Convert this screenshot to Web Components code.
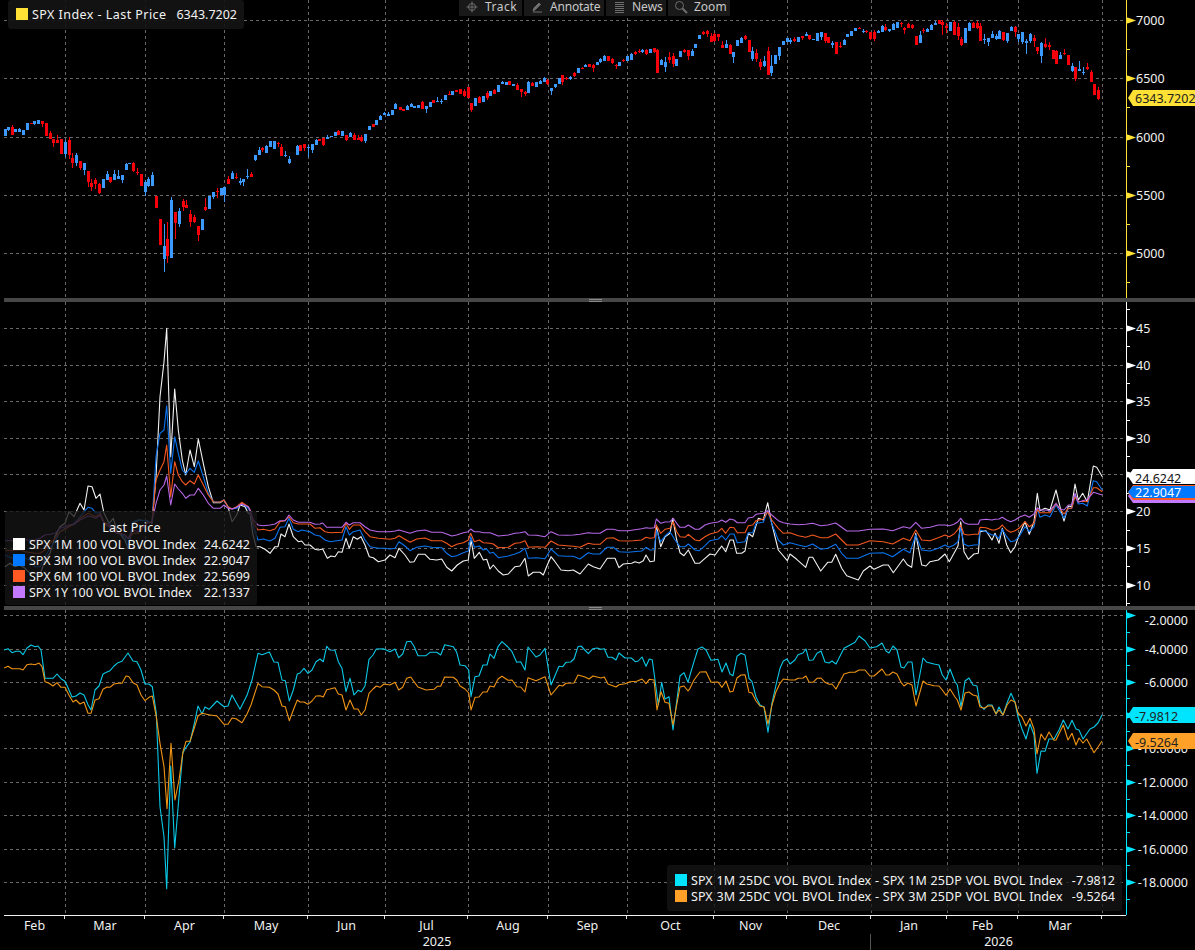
<![CDATA[<!DOCTYPE html>
<html><head><meta charset="utf-8"><title>SPX chart</title>
<style>
html,body{margin:0;background:#000;height:950px;overflow:hidden}
body{font-family:"Noto Sans","DejaVu Sans",sans-serif;font-size:12.5px;color:#f0f0f0;}
</style></head>
<body><chart-app>
  <chart-pane kind="price" top="0" height="298">
    <chart-legend style="left:4px;top:0;width:236px;height:29px;padding:6px 7px 0 8px;--ls:.45px;--ws:0px;background:rgba(20,20,20,.92)">
      <legend-row color="#ffe135" value="6343.7202">SPX Index - Last Price</legend-row>
    </chart-legend>
    <chart-toolbar></chart-toolbar>
  </chart-pane>
  <chart-divider></chart-divider>
  <chart-pane kind="vol" top="302" height="304">
    <chart-legend style="left:1px;top:209px;width:252px;height:94px;padding:9px 7px 0 8px;--ls:0px;--ws:.1px">
      <div style="text-align:center;height:16px;line-height:16px;letter-spacing:.2px">Last Price</div>
      <legend-row color="#fff" value="24.6242">SPX 1M 100 VOL BVOL Index</legend-row>
      <legend-row color="#0078ff" value="22.9047">SPX 3M 100 VOL BVOL Index</legend-row>
      <legend-row color="#ff5a24" value="22.5699">SPX 6M 100 VOL BVOL Index</legend-row>
      <legend-row color="#c278ff" value="22.1337">SPX 1Y 100 VOL BVOL Index</legend-row>
    </chart-legend>
  </chart-pane>
  <chart-divider></chart-divider>
  <chart-pane kind="skew" top="610" height="305">
    <chart-legend style="left:663px;top:255px;width:455px;height:46px;padding:7px 7px 0 8px;--ls:.08px;--ws:.4px">
      <legend-row color="#00e5ff" value="-7.9812">SPX 1M 25DC VOL BVOL Index - SPX 1M 25DP VOL BVOL Index</legend-row>
      <legend-row color="#ffa028" value="-9.5264">SPX 3M 25DC VOL BVOL Index - SPX 3M 25DP VOL BVOL Index</legend-row>
    </chart-legend>
  </chart-pane>
  <time-axis></time-axis>
</chart-app><script>
const FONT='12.5px "Noto Sans","DejaVu Sans",sans-serif';
const VX=[65,145,224,308,385,468,548,627,714,787,871,947,1018,1102];
const seg=(x0,y0,s)=>s.trim().split(/\s+/).map(p=>{const[a,b]=p.split(',').map(Number);return[x0+a/3,y0+b/3]});
const pts=a=>a.map(p=>p[0].toFixed(1)+','+p[1].toFixed(1)).join(' ');
const C1=`15u388,408,0,0 25u382,390,0,393 37r380,405,376,0 46u387,396,0,0 58u387,396,385,0 70u390,406,0,0 82u370,391,0,0 94r368,371,0,0 103u364,372,0,375 115u360,372,0,0 127r364,372,0,380 139r370,408,0,0 151r400,417,393,0 160r417,429,0,440 172r420,430,405,0 184r417,462,0,0 196u426,462,420,470 208r420,465,412,478 217r474,490,458,503 229u464,489,460,497 241r483,505,0,510 253u489,509,0,525 265r514,546,0,560 274r549,561,538,573 286r540,552,535,567 298r552,580,548,582 310u537,564,0,0 322u522,541,514,0 331r532,545,0,549 343u521,540,510,0 355u528,537,510,0 367u526,541,0,549 379u491,510,488,0 388u488,491,0,0 400r489,514,487,516 412r516,519,505,526 424r522,557,0,0 436u545,576,540,588 445u538,558,530,560 457u525,557,517,0 469r587,623,0,0 481r657,735,0,0 493u738,777,672,815 502r718,768,667,790 514u600,775,591,0 526r636,668,0,717 538u632,672,625,680 550r603,622,597,632 559r615,623,600,0 571r642,667,630,681 583r652,666,645,670 595r678,706,0,722 607u656,690,0,0 616r621,631,595,634 628u588,627,0,0 640u575,591,0,598 652r572,574,564,593 664u564,586,0,0 673u560,586,0,605 685r538,552,528,0 697u519,537,513,0 709r532,535,520,538 721u544,548,533,556 730u537,545,0,558 742u528,531,507,538 754r521,531,516,0 766u465,481,0,483 778u450,465,441,0 787r445,450,441,455 799u437,459,434,0 811u423,441,0,0 823u422,447,0,0 835r428,430,426,442 844r441,468,433,0 856u465,467,453,471 868u477,490,468,492 892u437,465,434,0 901r434,453,0,0 913r431,445,0,453 925u440,444,434,470 937u433,450,0,458 949u419,434,416,0 958r417,423,0,0 970r414,436,0,438 982u410,416,405,0 994u407,412,0,0 1006u397,408,0,0 1015r393,406,390,0 1027u393,408,0,0 1039r406,419,0,424 1051u400,412,395,0 1063r406,419,400,0 1075r414,420,405,0 1084r411,423,405,426 1096u402,424,0,428 1108u377,389,0,0 1120r372,380,0,0 1129u361,375,0,0 1141u347,361,344,0 1153u339,346,335,0 1165u342,347,337,0 1177u330,345,0,0 1187u311,326,308,0`;
const C2=`0r320,331,0,0 10r327,332,0,0 22u318,329,315,0 34u312,322,310,0 43u317,325,0,0 55u316,325,0,0 67r306,327,304,0 79u317,327,0,339 91u306,321,0,0 100r300,309,0,0 112u303,305,291,306 124u303,305,298,312 136u286,300,0,0 148r281,284,274,0 157u274,285,0,0 169r271,277,0,0 181r268,282,266,0 193r273,287,268,290 205r261,294,0,0 214r309,331,0,336 226u294,318,0,0 238r290,310,288,0 250u289,305,0,0 262r278,295,273,300 271u274,288,0,0 283r271,282,267,0 295u255,275,0,0 307u246,251,243,253 319u245,255,0,0 328r244,255,0,0 340u252,257,0,0 352r255,270,250,0 364r268,276,0,290 376r276,282,272,288 385u245,278,243,0 397r248,257,246,259 409u247,260,0,0 421u243,252,240,0 433u234,245,231,0 442r240,252,238,256 454u265,272,0,285 466u253,261,0,265 478u235,253,0,0 487r226,247,0,254 499r234,237,230,240 511u231,236,228,239 523r219,229,216,232 535u204,218,0,0 547r204,208,200,0 556u195,200,192,0 568r193,201,0,0 580r195,203,192,216 592u186,195,0,0 601u177,187,173,188 613u168,182,165,0 625r167,183,0,0 637r177,189,175,192 649r196,199,193,208 658u185,198,0,0 670r179,182,176,186 682u168,184,0,0 694u162,179,159,0 706r156,162,153,166 718r154,157,147,160 727u150,157,147,160 739r149,163,147,165 751u148,158,0,0 763r145,156,143,158 772r150,219,148,0 784u181,194,177,0 796u187,201,172,215 808r171,179,157,190 820r167,192,160,200 829u177,197,0,0 841u153,170,0,0 853r151,156,146,160 865r151,168,0,180 877u152,167,147,0 886u132,144,0,0 898u105,117,0,0 910r95,102,92,105 922r92,102,90,110 934r107,125,100,0 943r102,124,100,127 955r102,112,0,122 967r136,144,124,0 979u132,144,120,0 991r135,162,132,0 1000u156,172,0,188 1012u120,138,0,0 1024u115,129,111,0 1036r108,118,105,121 1048r120,155,0,0 1057u153,177,142,183 1069r159,177,147,185 1081r186,201,178,210 1093u183,197,168,200 1105r153,225,141,0 1114u197,219,165,228 1126u165,191,0,192 1138u141,167,0,180 1150u124,135,0,0 1162u115,127,0,0 1171u120,125,113,131 1183r116,124,112,127 1195u110,127,0,0`;
const C3=`6r108,114,0,120 18u103,108,96,0 27r104,117,0,120 39u116,119,0,0 51u99,123,0,0 63u95,112,0,120 75r99,123,0,128 84r110,128,0,130 96u128,134,123,144 108r127,161,0,0 120r139,142,126,145 132u120,135,118,0 141u103,111,0,0 153u94,108,0,0 165u83,93,0,0 177r84,86,82,88 189u92,95,88,99 199r92,95,89,100 211r96,118,0,120 223r97,117,90,123 235u94,100,90,0 247u79,95,76,0 256r82,90,72,93 268u87,93,0,96 280u71,90,68,0 292u67,84,0,0 304r69,73,66,82 313r83,89,80,101 325r72,83,70,85 337r74,85,72,87 349r107,135,0,0 361u104,128,93,0 370r90,93,85,98 382u88,95,83,0 394u76,90,73,0 406u68,74,64,0 418r61,72,60,0 427r66,74,60,105 439r77,85,68,100 451u65,93,0,0 463r65,106,62,106 475r82,108,68,120 484r116,135,112,137 496u84,128,0,0 508u70,94,66,0 520r69,84,65,0 532r68,84,62,86 541r77,122,70,0 553u116,121,103,132 565u113,127,0,137 577u102,114,94,0 589u107,117,102,119 598u92,118,90,0 610r95,121,0,123 622u98,123,0,128 634u80,93,78,0 646r81,96,77,110 655u102,118,0,125 667u97,125,0,132 679u124,129,116,163 691u103,124,100,128 703r113,122,105,140 712r141,154,0,163 724u130,168,127,188 736r132,142,114,144 748r135,142,127,150 760r151,177,0,0 769r152,191,150,0 781u165,177,157,0 793r159,161,147,165 805r166,195,0,0 817u197,212,189,216 826r202,238,0,243 838u207,212,183,212 850u216,220,200,224 862r202,207,190,210 874r215,245,210,0 883r252,285,0,0 895r270,297,262,300`;

const S={
 white:[...seg(0,290,`15,830 30,820 45,830 60,825 75,835 90,850 105,850 120,855 135,810 150,790 165,740 180,710 195,700 207,665 222,680 240,640 252,660 264,588 276,590 288,625 300,612 312,670 327,700 340,685 350,720 375,750 384,775 399,700 415,690 440,692 456,700 468,560 480,320 492,215 500,115 512,500 524,297 535,420 547,510 557,555 570,480 583,530 595,447 610,520 625,590 640,638 660,638 672,630 684,650 696,695 710,675 720,645 735,650 745,670`),
 ...seg(250,490,`0,70 8,130 18,170 30,170 45,178 60,190 75,170 84,170 93,132 105,140 117,102 130,140 145,155 155,153 165,165 180,165 195,178 205,180 218,177 232,205 243,198 255,200 265,185 276,187 288,145 298,175 310,140 322,148 333,140 345,165 358,200 370,203 385,215 405,210 420,195 435,203 447,175 465,195 480,217 492,215 505,193 525,193 540,208 560,210 575,207 590,232 605,243 622,225 640,213 655,210 663,150 673,205 688,187 700,210 710,208 720,237 730,225 745,243 760,255 775,252 795,230 810,228 825,205 835,258 850,247 870,247 880,255 892,225 903,200 915,215 933,240 955,242 970,240 990,252 1015,222 1030,230 1050,237 1072,205 1095,205 1107,233 1120,222 1145,220 1155,215 1168,219 1180,212 1188,195 1200,215 1213,213 1219,105 1232,170 1245,140 1260,130`),
 ...seg(670,490,`8,85 20,150 30,188 42,197 55,180 75,220 88,220 105,205 120,192 135,195 155,168 167,185 180,150 190,150 200,190 215,190 225,183 235,130 248,140 265,85 280,90 293,38 305,100 325,180 352,212 360,192 380,208 407,232 417,202 428,202 452,243 473,217 485,217 497,193 515,235 530,257 565,270 580,243 600,228 612,238 640,225 655,225 670,248 700,207 712,224 725,232 737,130 755,225 768,228 780,215 805,210 825,192 838,215`),
 ...seg(950,440,`12,340 24,318 32,245 42,335 55,358 72,342 85,340 90,275 108,272 126,300 135,280 147,310 157,265 170,315 182,338 195,320 207,285 225,245 238,283 252,245 262,160 270,212 285,205 300,210 318,150 330,200 342,243 355,198 365,200 375,132 385,180 398,160 412,185 430,78 440,82 457,110`)],
 blue:[...seg(0,290,`15,795 35,805 60,800 90,810 105,830 120,830 135,800 150,775 165,755 180,725 195,715 207,710 222,700 240,680 264,652 276,655 288,670 300,665 312,700 327,700 340,710 350,725 375,740 384,770 399,695 415,690 440,692 456,698 468,500 480,430 492,420 500,347 512,550 524,440 535,490 547,540 557,552 570,535 583,547 595,513 610,560 625,610 640,635 660,636 672,630 684,650 696,657 710,655 725,640 745,655`),
 ...seg(250,490,`0,65 10,110 24,150 40,147 60,153 75,145 90,112 105,110 117,85 130,118 145,125 155,120 180,125 195,135 210,138 225,150 240,155 260,152 276,150 288,110 298,135 310,125 330,120 345,150 360,170 385,175 405,175 420,177 435,175 447,155 465,168 480,182 500,172 525,168 545,172 575,173 590,190 605,200 620,197 640,188 655,183 662,140 673,172 688,168 700,180 710,177 720,190 730,187 745,203 775,198 795,192 810,186 825,175 835,205 860,203 885,206 903,177 925,197 950,199 970,199 990,207 1015,188 1030,192 1050,192 1070,172 1090,172 1107,185 1135,187 1150,185 1175,183 1188,172 1200,180 1213,179 1219,120 1232,155 1245,138 1260,125`),
 ...seg(670,490,`15,150 30,170 45,170 55,162 75,180 88,182 105,167 120,152 145,147 155,137 167,150 180,132 192,132 202,158 225,155 235,128 248,128 258,100 280,97 293,62 305,100 325,150 340,165 360,158 385,165 407,170 428,162 452,178 473,175 497,163 515,190 530,205 565,205 600,190 640,188 668,200 700,178 720,188 737,135 755,180 780,183 805,175 825,165 838,172`),
 ...seg(950,440,`12,315 24,305 32,262 42,312 55,318 72,315 85,314 90,270 108,275 126,285 135,285 147,295 157,268 170,290 182,305 195,302 207,290 225,260 238,275 252,260 262,205 270,232 285,225 300,230 318,195 330,215 342,235 355,205 365,205 375,165 385,192 398,190 412,198 430,122 440,125 457,150`)],
 red:[...seg(0,290,`15,780 35,782 60,780 75,785 105,790 120,790 135,780 150,760 165,745 180,725 195,718 207,710 222,703 240,685 264,670 276,675 288,680 300,670 312,695 327,705 340,715 350,725 375,735 384,745 399,730 415,730 440,700 456,695 468,570 480,540 492,515 500,465 512,620 524,515 535,555 547,575 557,585 570,572 583,582 595,555 610,585 625,615 640,635 660,636 672,630 684,650 696,657 710,650 725,637 745,650`),
 ...seg(250,490,`0,60 10,100 24,120 40,118 60,122 75,117 90,95 105,92 117,80 130,98 145,102 180,102 195,115 210,113 225,125 240,128 276,127 288,100 298,118 310,105 330,105 345,125 360,140 385,145 420,148 435,145 447,137 465,148 480,157 500,147 525,144 545,152 575,152 590,160 605,170 620,163 640,158 655,150 662,130 673,155 688,150 700,158 720,160 730,162 745,173 775,172 795,160 810,158 825,152 835,172 860,170 885,172 903,153 925,165 950,167 970,169 990,172 1015,160 1030,163 1050,163 1070,145 1090,143 1107,152 1135,153 1150,152 1175,150 1188,142 1200,145 1213,143 1219,105 1232,130 1245,118 1260,115`),
 ...seg(670,490,`10,95 20,125 30,140 45,142 55,133 75,150 88,152 105,140 120,132 145,125 155,115 167,130 180,112 192,113 202,128 225,128 235,107 248,105 258,92 280,87 293,65 305,90 325,115 340,130 360,128 385,137 407,142 428,135 452,143 473,143 497,132 515,150 530,165 565,165 600,152 640,155 668,162 700,145 720,152 737,120 755,150 780,152 805,143 825,135 838,140`),
 ...seg(950,440,`12,282 24,268 32,255 42,283 55,285 72,283 85,283 90,262 108,263 126,270 135,270 147,265 157,255 170,270 182,277 195,272 207,265 225,245 238,260 252,250 262,208 270,218 285,218 300,218 318,192 330,207 342,222 355,205 365,205 375,170 385,185 398,184 412,185 430,143 440,143 457,155`)],
 purple:[...seg(0,290,`15,752 35,752 60,752 75,750 105,750 120,745 135,735 150,733 165,730 180,715 195,710 207,705 222,703 240,690 264,678 276,680 288,685 300,675 312,700 327,710 340,722 350,730 375,735 384,745 399,720 415,725 440,700 456,695 468,640 480,600 492,585 500,558 512,645 524,582 535,597 547,610 557,625 570,615 583,615 595,595 610,615 625,640 640,655 660,655 672,645 684,655 696,657 710,652 725,642 745,650`),
 ...seg(250,490,`0,60 10,90 24,105 40,107 60,105 75,102 90,92 105,92 117,75 130,90 145,97 180,97 195,103 210,102 218,99 230,112 276,112 288,97 298,105 310,98 330,98 345,110 360,120 385,125 420,125 435,123 447,120 465,125 480,130 500,123 525,120 545,127 575,127 590,132 605,138 620,135 640,128 655,125 662,117 673,125 688,125 700,128 720,128 730,132 745,138 775,135 795,130 810,128 825,125 835,135 860,136 885,140 903,125 925,135 950,136 970,135 990,133 1015,128 1030,130 1050,130 1070,118 1090,118 1107,122 1135,122 1150,120 1175,116 1188,113 1200,115 1213,113 1219,87 1232,100 1245,96 1260,95`),
 ...seg(670,490,`10,85 20,100 30,112 45,112 55,105 75,118 88,118 105,105 120,100 145,96 155,90 167,97 180,87 192,90 202,98 225,98 235,84 248,82 258,73 280,70 293,62 305,75 325,92 340,98 360,102 385,104 407,103 428,100 452,107 473,105 497,99 515,112 530,123 565,123 600,118 640,117 668,122 700,110 720,115 737,97 755,115 780,112 805,105 825,105 838,107`),
 ...seg(950,440,`12,253 24,245 32,235 42,248 55,253 72,253 85,253 90,240 108,238 126,240 135,238 147,237 157,232 170,240 182,245 195,240 207,232 225,225 238,232 252,222 262,203 270,210 285,210 300,212 318,190 330,207 342,210 355,195 365,195 375,160 385,187 398,182 412,178 430,157 440,160 457,165`)],
 cyan:[...seg(0,610,`12,120 24,116 36,128 48,124 60,124 69,134 81,114 93,105 105,110 114,108 123,120 135,205 147,205 159,205 171,192 183,206 195,214 207,240 216,261 228,258 240,249 252,255 264,284 273,300 285,240 297,228 309,192 321,186 330,182 342,168 354,158 366,154 384,129 399,153 411,155 423,180 435,222 447,222 457,230 469,310 480,590 492,680 500,836 512,468 524,714 536,570 548,430 556,415 570,396 582,345 594,288 606,312 615,291 627,298 651,273 672,290 684,288 696,255 720,298 741,256 756,210 774,130 786,134 808,126 822,156 834,157 846,210 856,212 868,273 880,240 892,192 900,189`),
 ...seg(290,625,`42,130 54,145 66,135 78,110 90,102 100,110 110,64 120,75 135,76 145,110 156,130 168,200 180,160 192,210 204,196 214,200 225,183 237,103 249,90 259,72 280,71 300,80 315,72 326,98 338,87 350,50 362,49 372,64 384,92 408,92 420,82 440,82 452,90 464,59 490,65 500,82 510,120 525,122 536,135 543,215 555,155 567,153 579,120 591,120 600,87 612,100 624,65 636,50 654,66 666,80 680,112 692,110 705,135 714,66 738,96 750,90 765,70 783,180 807,124 818,125 828,112 842,111 852,102 864,65 873,63 895,86 909,71 921,69 933,73 943,71 954,97 966,97 978,105 987,84 1005,99 1024,99 1036,110 1045,108 1056,96 1068,124 1078,102 1087,105 1105,240 1115,172 1125,222 1137,215 1149,315 1170,153 1182,143 1194,172 1200,150`),
 ...seg(690,625,`12,110 24,72 36,66 48,75 63,106 84,103 96,141 108,114 120,147 129,152 141,94 153,85 165,90 177,160 186,170 198,216 210,240 222,246 234,322 246,234 258,180 270,130 280,108 291,102 300,117 315,105 324,89 339,84 348,72 357,106 369,105 381,85 393,78 405,111 417,114 426,108 438,117 462,70 480,60 495,52 507,33 525,47 540,69 560,65 576,54 588,78 597,84 609,63 621,75 633,126 642,129 654,111 666,111 678,210 699,99 711,112 732,117 747,120 757,150 768,165 780,132 795,170 802,180 813,246 825,168 837,159 849,180 861,183 870,240 882,253 894,240 906,240 918,267 927,246 939,270 951,234 963,205 975,232 984,276 996,312 1008,342 1020,297 1032,330 1041,445 1053,378 1065,379 1077,342 1092,342 1107,315 1120,285 1134,312 1146,286 1158,312 1167,315 1179,342 1200,312 1212,306 1224,294 1236,270`)],
 amber:[...seg(0,610,`12,174 24,169 36,176 60,176 69,180 81,164 93,162 105,164 117,159 126,170 135,215 147,220 159,228 171,218 183,232 195,232 207,256 219,276 228,270 240,282 252,276 264,310 273,310 285,270 297,266 309,238 321,231 330,232 342,222 354,220 366,220 378,198 387,200 399,218 411,225 423,255 435,272 447,262 457,258 469,320 480,400 492,470 501,596 513,400 525,570 537,510 549,425 558,394 570,394 582,357 594,318 606,310 627,314 651,318 672,343 684,343 696,324 708,326 726,338 741,312 753,285 774,220 786,230 808,232 822,240 834,252 846,288 856,290 868,332 880,300 892,270 900,276`),
 ...seg(290,625,`42,231 54,238 66,228 78,213 90,212 100,216 110,194 120,192 135,188 145,207 156,210 168,255 180,225 192,252 204,252 214,270 225,255 237,205 249,192 259,183 270,187 282,177 300,180 315,172 326,195 338,187 350,160 362,156 372,170 384,186 408,195 432,193 442,184 452,184 464,156 490,157 500,165 510,183 525,192 536,204 543,255 555,217 567,216 579,201 591,201 600,183 612,186 624,162 636,154 654,166 666,165 680,185 692,186 705,201 714,158 738,167 750,162 765,155 783,210 807,181 818,183 828,175 852,174 864,150 885,156 897,162 909,153 921,156 933,159 943,156 954,177 978,186 987,179 1005,176 1020,170 1040,169 1056,162 1068,176 1078,163 1092,165 1101,255 1113,200 1125,232 1137,235 1149,300 1170,186 1182,183 1194,198 1200,190`),
 ...seg(690,625,`12,165 30,141 48,140 63,172 84,171 96,187 108,168 120,201 129,199 141,159 153,150 165,149 177,202 186,204 198,228 210,243 222,246 234,297 246,240 258,200 270,175 280,162 300,165 315,165 324,160 339,159 348,153 357,171 369,172 381,160 393,159 405,172 417,178 426,177 438,192 462,147 480,142 495,142 507,135 525,135 540,153 552,153 576,132 588,150 597,150 609,141 621,147 633,172 642,183 654,174 666,180 678,243 699,168 711,177 732,182 747,183 757,195 768,211 780,192 795,216 802,225 813,255 825,204 837,201 849,210 861,213 870,246 882,250 894,243 906,243 918,267 927,255 939,270 951,240 963,225 975,231 984,264 996,276 1008,303 1020,280 1032,312 1041,387 1053,327 1065,345 1077,321 1092,346 1098,345 1107,326 1120,300 1134,345 1146,325 1158,360 1167,339 1179,354 1190,342 1200,360 1212,383 1224,366 1236,348`)]
};
function candles(){
 let out='';
 [[C1,0],[C2,1200],[C3,2400]].forEach(([s,off])=>s.split(' ').forEach(t=>{
  const m=t.match(/^(\d+)([ur])(\d+),(\d+),(\d+),(\d+)$/); if(!m)return;
  const x=Math.floor((+m[1]+off)/3),bt=+m[3],bb=+m[4],wt=Math.min(+m[5]||bt,bt),wb=Math.max(+m[6]||bb,bb);
  const col=m[2]=='u'?'#3c9aff':'#f6000c';
  const Y=v=>Math.round(v/3);
  out+=`<rect x="${x}" y="${Y(wt)}" width="1" height="${Math.max(1,Y(wb)-Y(wt))}" fill="${col}"/><rect x="${x-1}" y="${Y(bt)}" width="3" height="${Math.max(1,Y(bb)-Y(bt))}" fill="${col}"/>`;
 }));
 return out;
}
const PANES={
 price:{col:'#ffe135',grid:[20.5,78.5,137,195,253],labels:[['7000',20.5],['6500',78.5],['6000',137],['5500',195],['5000',253]],anchor:'start',
  minor:[49.5,107.5,166,224,282],
  tags:[['6343.7202',90,106,'#ffe135','#222',103]]},
 vol:{col:'#fff',grid:[328,365,401.5,438,474.5,511.5,548,585],labels:[['45',328],['40',365],['35',401.5],['30',438],['25',474.5],['20',511.5],['15',548],['10',585]],anchor:'start',
  minor:[309.5,346.5,383,420,456,493,530,566.5,603],
  tags:[['',489,503,'#c278ff','#fff'],['',485,500,'#ff5a24','#fff'],['22.9047',486,498,'#0078ff','#fff',496.5],['24.6242',469,484,'#fff','#111',483]]},
 skew:{col:'#00e5ff',grid:[615,649,682,715,748,782,815.5,849,882],labels:[['-2.0000',620],['-4.0000',649],['-6.0000',682],['-8.0000',715],['-10.0000',748],['-12.0000',782],['-14.0000',815.5],['-16.0000',849],['-18.0000',882]],anchor:'end',
  minor:[632,665.5,698.5,731.5,765,799,832,865.5,899],
  tags:[['-7.9812',707,723,'#00e5ff','#222',721],['-9.5264',733,749,'#ffa028','#222',747]]}
};
class ChartApp extends HTMLElement{constructor(){super();this.attachShadow({mode:'open'}).innerHTML=`<style>:host{display:flex;flex-direction:column;width:1195px;height:950px;background:#000;padding-left:4px;box-sizing:border-box;overflow:hidden}</style><slot></slot>`}}
class ChartDivider extends HTMLElement{constructor(){super();this.attachShadow({mode:'open'}).innerHTML=`<style>:host{display:flex;flex:none;flex-direction:column;align-items:center;justify-content:center;gap:1px;height:4px;background:#474747;padding-right:8px;box-sizing:border-box}i{display:block;width:13px;height:1px;background:#8a8a8a}</style><i></i><i></i>`}}
class ChartPane extends HTMLElement{connectedCallback(){
 if(this.shadowRoot)return;
 const k=this.getAttribute('kind'),top=+this.getAttribute('top'),h=+this.getAttribute('height'),P=PANES[k];
 let plot='';
 const dash=`stroke="#686868" stroke-width="1" stroke-dasharray="3 3" shape-rendering="crispEdges"`;
 P.grid.forEach(y=>plot+=`<line x1="4" x2="1126" y1="${Math.floor(y)+.5}" y2="${Math.floor(y)+.5}" ${dash}/>`);
 VX.forEach(x=>plot+=`<line x1="${x+.5}" x2="${x+.5}" y1="${top}" y2="${top+h}" ${dash}/>`);
 const line=(s,c)=>`<polyline points="${pts(s)}" fill="none" stroke="${c}" stroke-width="1.1" stroke-linejoin="round"/>`;
 if(k=='price')plot+=`<g shape-rendering="crispEdges">${candles()}</g>`;
 if(k=='vol')plot+=line(S.white,'#f2f2f2')+line(S.blue,'#0a74f0')+line(S.red,'#f4581f')+line(S.purple,'#b868e8');
 if(k=='skew')plot+=line(S.cyan,'#0bc8e6')+line(S.amber,'#f09414');
 let ax=`<rect x="1126" y="${top}" width="1" height="${h}" fill="${P.col}"/>`;
 P.minor.forEach(y=>ax+=`<rect x="1127" y="${Math.floor(y)}" width="3" height="1" fill="${P.col}"/>`);
 P.grid.forEach(y=>{const f=Math.floor(y)+.5;ax+=`<polygon points="1127,${f-3} 1129,${f-2.5} 1136,${f} 1129,${f+2.5} 1127,${f+3}" fill="${P.col}"/>`});
 P.labels.forEach(([t,y])=>{ax+=`<text x="${P.anchor=='end'?1188:1136}" y="${Math.floor(y)+5}" text-anchor="${P.anchor}" fill="#f2f2f2">${t}</text>`});
 P.tags.forEach(([t,a,b,c,tc,base])=>{const m=(a+b)/2;ax+=`<polygon points="1128,${m} 1133,${a} 1195,${a} 1195,${b} 1133,${b}" fill="${c}"/>`;if(t)ax+=`<text x="1135" y="${base}" fill="${tc}">${t}</text>`});
 this.attachShadow({mode:'open'}).innerHTML=`<style>
 :host{display:grid;flex:none;grid-template-columns:1122px 69px;position:relative;height:${h}px;overflow:hidden}
 svg{display:block;font:${FONT}}
 </style>
 <svg width="1122" height="${h}" viewBox="4 ${top} 1122 ${h}">${plot}</svg>
 <svg width="69" height="${h}" viewBox="1126 ${top} 69 ${h}">${ax}</svg>
 <slot></slot>`;
}}
class ChartLegend extends HTMLElement{constructor(){super();this.attachShadow({mode:'open'}).innerHTML=`<style>:host{position:absolute;display:flex;flex-direction:column;box-sizing:border-box;background:rgba(20,20,20,.78);border-radius:3px;color:#f2f2f2;font:12.5px/16px "Noto Sans","DejaVu Sans",sans-serif;white-space:nowrap}</style><slot></slot>`}}
class LegendRow extends HTMLElement{connectedCallback(){if(this.shadowRoot)return;this.attachShadow({mode:'open'}).innerHTML=`<style>:host{display:flex;align-items:center;height:16px;gap:4px}i{width:12px;height:12px;background:${this.getAttribute('color')};flex:none}span{margin-top:2px}.n{flex:1;letter-spacing:var(--ls,0);word-spacing:var(--ws,0)}</style><i></i><span class="n"><slot></slot></span><span>${this.getAttribute('value')}</span>`}}
class ChartToolbar extends HTMLElement{constructor(){super();const s='stroke="#6e6e6e" fill="none" stroke-width="1"';
 const b=(w,ls,icon,t)=>`<div class="b" style="width:${w}px"><svg width="14" height="14" viewBox="0 0 14 14" ${s}>${icon}</svg><span style="margin-left:6px;letter-spacing:${ls}px">${t}</span></div>`;
 this.attachShadow({mode:'open'}).innerHTML=`<style>:host{position:absolute;left:455px;top:0;display:flex;gap:2px;height:16px}.b{display:flex;align-items:center;height:16px;box-sizing:border-box;padding:0 0 3px 6px;background:#191919;color:#c8c8c8;font:12px/13px "Noto Sans","DejaVu Sans",sans-serif;white-space:nowrap}svg{flex:none}</style>
 ${b(63,.5,'<circle cx="7" cy="7" r="3.5"/><path d="M7 1.5v11M1.5 7h11"/>','Track')}
 ${b(80,-.2,'<path d="M3 12h9M3 11l1-3 5-5 1.5 1.5-5 5z" fill="#6e6e6e"/>','Annotate')}
 ${b(60,0,'<path d="M3 2.5h9M3 4.5h9M3 6.5h9M3 8.5h9M3 10.5h9M3 12.5h9"/>','News')}
 ${b(62,0,'<circle cx="5.5" cy="5.5" r="4"/><path d="M8.5 8.5l4.5 4.5" stroke-width="2"/>','Zoom')}`}}
class TimeAxis extends HTMLElement{constructor(){super();
 const m=['Feb','Mar','Apr','May','Jun','Jul','Aug','Sep','Oct','Nov','Dec','Jan','Feb','Mar'];
 const w=[61,80,79,84,77,83,80,79,87,73,84,76,71,84];
 this.attachShadow({mode:'open'}).innerHTML=`<style>
 :host{display:block;flex:none;height:35px;width:1122px;box-sizing:border-box;border-top:1px solid #f0f0f0;color:#f0f0f0;font:12.5px/16px "Noto Sans","DejaVu Sans",sans-serif}
 .m{display:grid;grid-template-columns:${w.map(x=>x+'px').join(' ')} 1fr;height:16px;padding-top:2px}
 .m div{text-align:center;margin-top:-2px;padding-top:2px;background:linear-gradient(#ddd,#ddd) right top/1px 3px no-repeat}
 .m div:last-child{background:none}
 .y{display:grid;grid-template-columns:866px 1fr;height:18px;padding-top:0}
 .y div{text-align:center}
 .y div+div{border-left:1px solid #555}
 </style><div class="m">${m.map(t=>`<div>${t}</div>`).join('')}<div></div></div><div class="y"><div>2025</div><div>2026</div></div>`}}
customElements.define('chart-app',ChartApp);
customElements.define('chart-divider',ChartDivider);
customElements.define('chart-pane',ChartPane);
customElements.define('chart-legend',ChartLegend);
customElements.define('legend-row',LegendRow);
customElements.define('chart-toolbar',ChartToolbar);
customElements.define('time-axis',TimeAxis);
</script></body></html>]]>
